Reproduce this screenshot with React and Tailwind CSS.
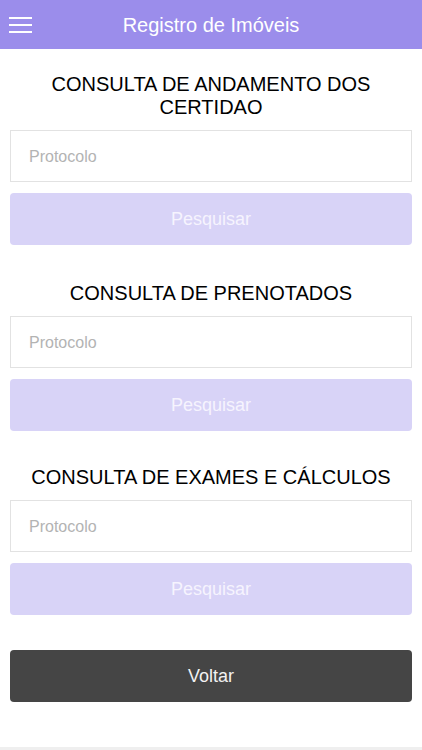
const sections = [
  { title: "CONSULTA DE ANDAMENTO DOS CERTIDAO", spacing: "mt-[24px]" },
  { title: "CONSULTA DE PRENOTADOS", spacing: "mt-[37px]" },
  { title: "CONSULTA DE EXAMES E CÁLCULOS", spacing: "mt-[35px]" },
]

function MenuIcon() {
  return (
    <div className="flex w-[23px] flex-col gap-[5px]">
      <span className="block h-[2px] w-full bg-white" />
      <span className="block h-[2px] w-full bg-white" />
      <span className="block h-[2px] w-full bg-white" />
    </div>
  )
}

function ConsultaSection({ section }) {
  return (
    <div className={section.spacing}>
      <h2 className="px-2 text-center text-[20px] leading-[23px] text-black">
        {section.title}
      </h2>
      <input
        type="text"
        placeholder="Protocolo"
        className="mt-[11px] block h-[52px] w-full border border-[#e2e2e2] bg-white px-[18px] pt-[2px] text-[16px] text-gray-800 outline-none placeholder:text-[#b3b3b3]"
      />
      <button className="mt-[11px] flex h-[52px] w-full items-center justify-center rounded-[4px] bg-[#d8d3f7] pt-[1px] text-[18px] text-[#f6f4fe]">
        Pesquisar
      </button>
    </div>
  )
}

export default function App() {
  return (
    <div className="flex h-[750px] w-full flex-col bg-white font-['Liberation_Sans',Arial,sans-serif]">
      {/* Header */}
      <header className="relative flex h-[49px] shrink-0 items-center justify-center bg-[#9b8deb]">
        <div className="absolute left-[9px] top-[17px]">
          <MenuIcon />
        </div>
        <h1 className="text-[20px] text-white">Registro de Imóveis</h1>
      </header>

      {/* Content */}
      <main className="flex-1 px-[10px]">
        {sections.map((section) => (
          <ConsultaSection key={section.title} section={section} />
        ))}

        <button className="mt-[35px] flex h-[52px] w-full items-center justify-center rounded-[4px] bg-[#454545] text-[18px] text-[#f2f2f2]">
          Voltar
        </button>
      </main>

      <div className="h-[3px] shrink-0 bg-[#efefef]" />
    </div>
  )
}
